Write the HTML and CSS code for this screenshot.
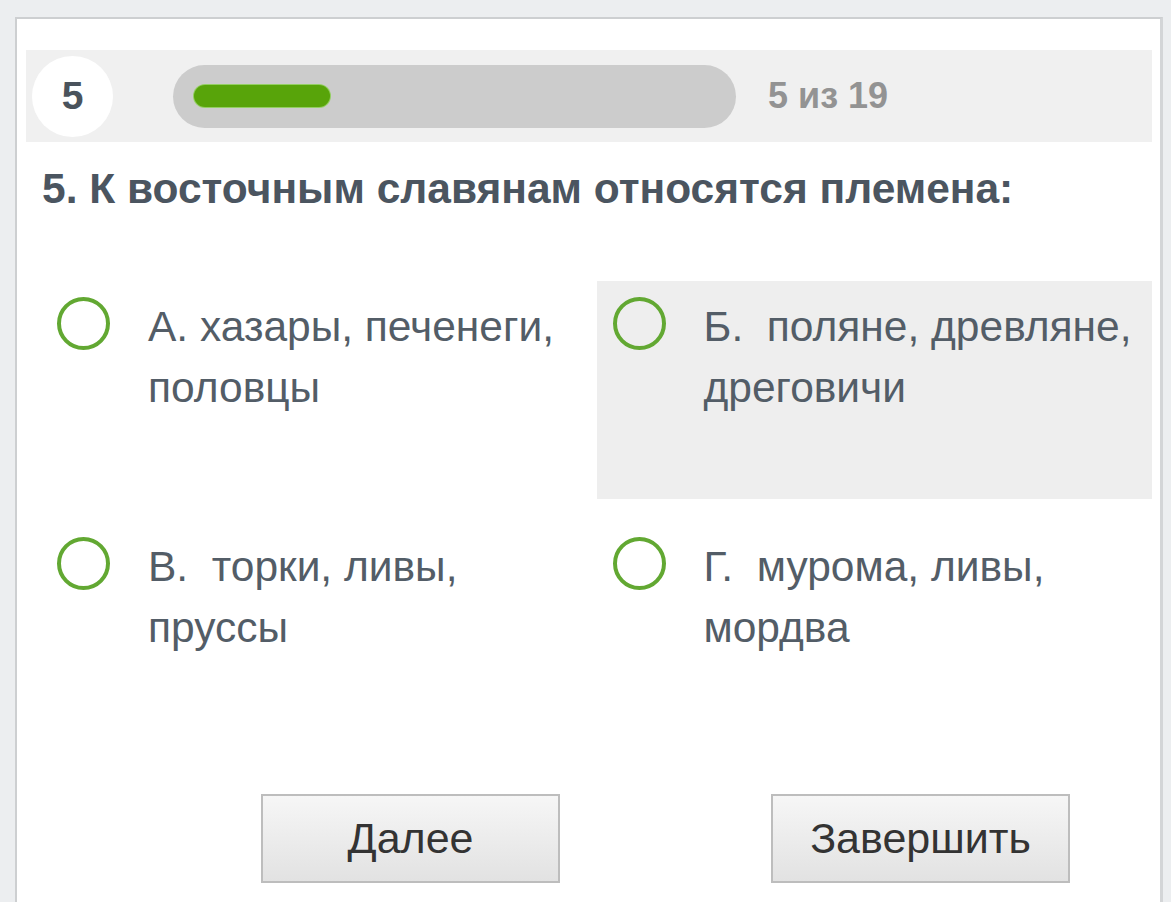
FILE: index.html
```html
<!DOCTYPE html>
<html lang="ru">
<head>
    <meta charset="UTF-8">
    <meta name="viewport" content="width=device-width, initial-scale=1.0">
    <title>Тест</title>
    <link rel="stylesheet" href="styles.css">
</head>
<body>
    <div class="card">
        <div class="header">
            <div class="badge">5</div>
            <div class="track">
                <div class="fill"></div>
            </div>
            <div class="counter">5 из 19</div>
        </div>

        <h2 class="question">5. К восточным славянам относятся племена:</h2>

        <div class="answers">
            <label class="answer">
                <span class="radio"></span>
                <span class="answer-text">А. хазары, печенеги, половцы</span>
            </label>
            <label class="answer active">
                <span class="radio"></span>
                <span class="answer-text">Б.&nbsp; поляне, древляне, дреговичи</span>
            </label>
            <label class="answer">
                <span class="radio"></span>
                <span class="answer-text">В.&nbsp; торки, ливы, пруссы</span>
            </label>
            <label class="answer">
                <span class="radio"></span>
                <span class="answer-text">Г.&nbsp; мурома, ливы, мордва</span>
            </label>
        </div>

        <div class="buttons">
            <button class="btn">Далее</button>
            <button class="btn">Завершить</button>
        </div>
    </div>
</body>
</html>
```

FILE: styles.css
```css
body {
    margin: 0;
    background: #eceef0;
    font-family: "Liberation Sans", Arial, sans-serif;
    overflow: hidden;
}
.card {
    margin: 17px 0 0 15px;
    width: 1148px;
    height: 900px;
    background: #fff;
    border-left: 2px solid #cdcfd1;
    border-top: 2px solid #cdcfd1;
    border-right: 3px solid #d3d5d7;
    padding: 31px 8px 0 9px;
    box-sizing: border-box;
}
.header {
    height: 92px;
    background: #f0f0f0;
    display: flex;
    align-items: center;
    padding-left: 6px;
}
.badge {
    width: 81px;
    height: 81px;
    border-radius: 50%;
    background: #fff;
    color: #4a535c;
    font-weight: bold;
    font-size: 39px;
    display: flex;
    align-items: center;
    justify-content: center;
}
.track {
    margin-left: 60px;
    width: 563px;
    height: 63px;
    border-radius: 32px;
    background: #cccccc;
    padding: 20px 0 0 21px;
    box-sizing: border-box;
}
.fill {
    width: 136px;
    height: 22px;
    border-radius: 11px;
    background: #58a40a;
    box-shadow: 0 0 0 1px #94cf62;
}
.counter {
    margin-left: 32px;
    color: #939393;
    font-weight: bold;
    font-size: 36px;
}
.question {
    margin: 23px 0 0 16px;
    color: #4b5560;
    font-size: 42.5px;
    line-height: 48px;
}
.answers {
    margin: 68px 0 0 15px;
    display: grid;
    grid-template-columns: 1fr 1fr;
    grid-auto-rows: 218px;
    row-gap: 22px;
}
.answer {
    display: flex;
    align-items: flex-start;
    padding: 16px 18px 0 16px;
}
.answer.active {
    background: #eeeeee;
}
.radio {
    flex: none;
    width: 45px;
    height: 45px;
    border: 4px solid #62a832;
    border-radius: 50%;
}
.answer-text {
    margin: -1px 0 0 38px;
    color: #535d67;
    font-size: 42.5px;
    line-height: 61px;
}
.buttons {
    display: flex;
    gap: 211px;
    margin: 55px 0 0 235px;
}
.btn {
    width: 299px;
    height: 89px;
    border: 2px solid #bdbdbd;
    background: linear-gradient(#f6f6f6, #e2e2e2);
    color: #333;
    font-family: "Liberation Sans", Arial, sans-serif;
    font-size: 43px;
    border-radius: 0;
}
```
